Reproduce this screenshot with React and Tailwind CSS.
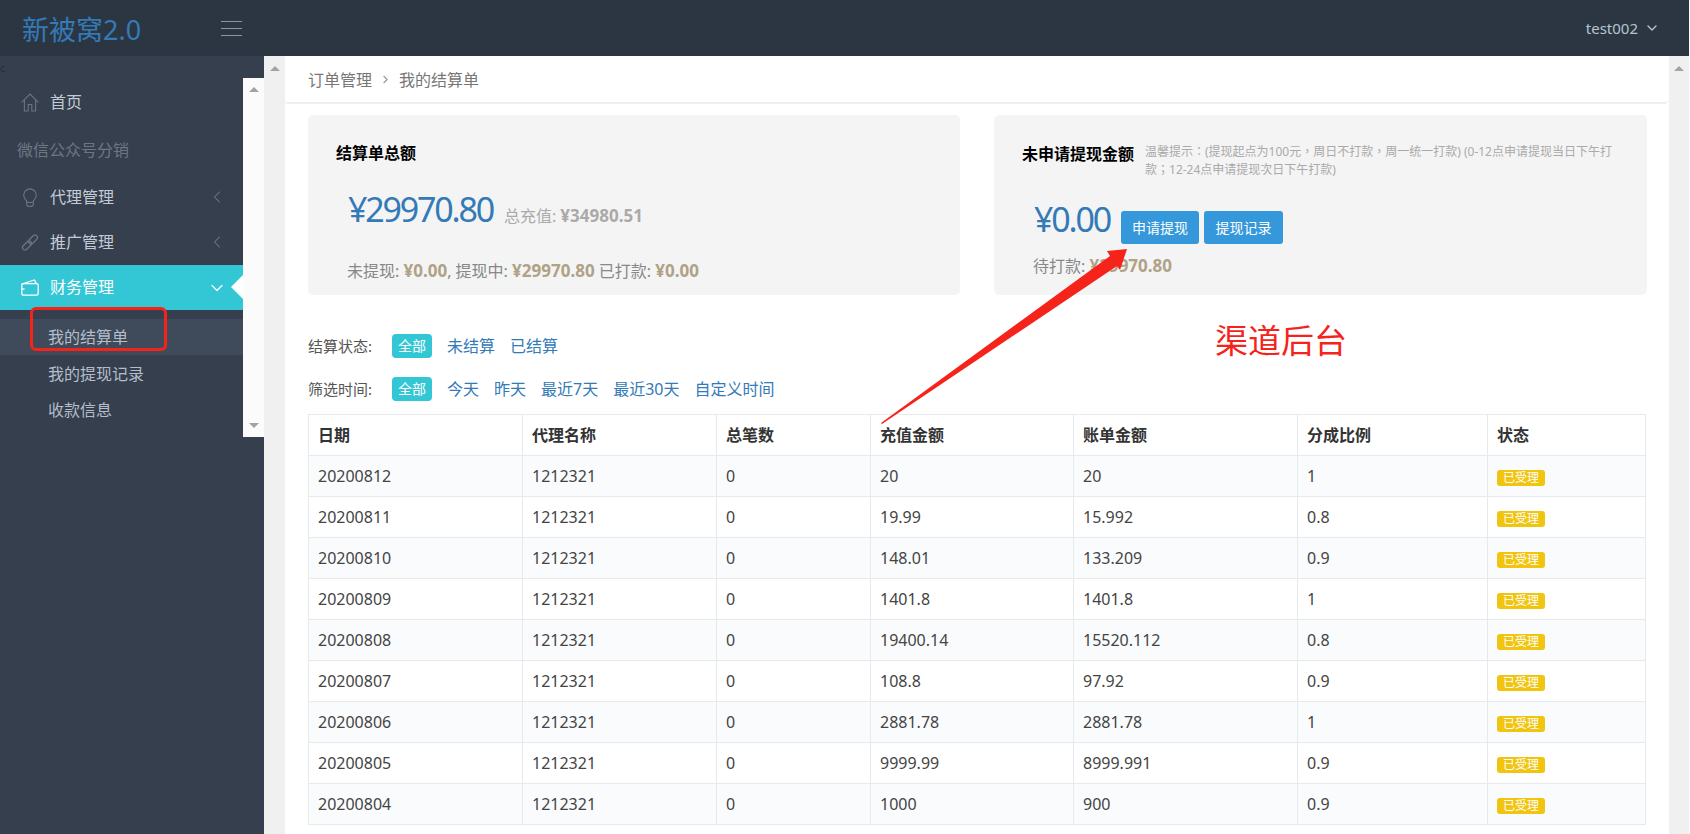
import { ChevronDown, ChevronLeft } from 'lucide-react'

const rows = [
  ['20200812', '20', '20', '1'],
  ['20200811', '19.99', '15.992', '0.8'],
  ['20200810', '148.01', '133.209', '0.9'],
  ['20200809', '1401.8', '1401.8', '1'],
  ['20200808', '19400.14', '15520.112', '0.8'],
  ['20200807', '108.8', '97.92', '0.9'],
  ['20200806', '2881.78', '2881.78', '1'],
  ['20200805', '9999.99', '8999.991', '0.9'],
  ['20200804', '1000', '900', '0.9'],
]

const headers = ['日期', '代理名称', '总笔数', '充值金额', '账单金额', '分成比例', '状态']

function HomeIcon() {
  return (
    <svg width="18" height="19" viewBox="0 0 18 19" fill="none" stroke="currentColor" strokeWidth="1.1" className="shrink-0">
      <path d="M.6 9.4 9 1l8.4 8.4" />
      <path d="M3.4 7v11h3.8v-6.5h3.6V18h3.8V7" />
    </svg>
  )
}

function BulbIcon() {
  return (
    <svg width="18" height="19" viewBox="0 0 18 19" fill="none" stroke="currentColor" strokeWidth="1.1" className="shrink-0">
      <path d="M5.6 13C4 11.4 2.7 9.8 2.7 7.2a6.3 6.3 0 0 1 12.6 0c0 2.6-1.3 4.2-2.9 5.8v3c0 1.5-1 2.4-2.4 2.4H8c-1.4 0-2.4-.9-2.4-2.4Z" />
      <path d="M5.6 14.4h6.8" />
    </svg>
  )
}

function LinkIcon() {
  return (
    <svg width="18" height="19" viewBox="0 0 18 19" fill="none" stroke="currentColor" strokeWidth="1.3" className="shrink-0">
      <rect x="-.5" y="7" width="10.5" height="5" rx="2.5" transform="rotate(-45 9 9.5)" />
      <rect x="8" y="7" width="10.5" height="5" rx="2.5" transform="rotate(-45 9 9.5)" />
    </svg>
  )
}

function WalletIcon() {
  return (
    <svg width="18" height="17" viewBox="0 0 18 17" fill="none" stroke="currentColor" strokeWidth="1.3" className="shrink-0">
      <path d="M.8 5 13.5 1l1.6 3.4" />
      <rect x=".8" y="4.6" width="16.4" height="11.6" rx="1.6" />
      <path d="M.8 10h2.8" />
    </svg>
  )
}

function ScrollUp() {
  return <div className="w-0 h-0 border-x-[5px] border-x-transparent border-b-[5px] border-b-[#a3a3a3]" />
}

function ScrollDown() {
  return <div className="w-0 h-0 border-x-[5px] border-x-transparent border-t-[5px] border-t-[#a3a3a3]" />
}

function NavItem({ icon, label, chevron, height }) {
  return (
    <div className={`${height} flex items-center pl-[21px] pr-[16px] text-[#c3cbd5] text-base`}>
      <span className="text-[#687587] flex">{icon}</span>
      <span className="ml-[11px] flex-1">{label}</span>
      {chevron && <ChevronLeft size={20} strokeWidth={1.25} className="text-[#6d7a8b]" />}
    </div>
  )
}

function Sidebar() {
  return (
    <aside className="w-[264px] shrink-0 bg-[#353f4e] flex flex-col">
      <div className="h-[22px] text-[#262e39] text-[11px] leading-[24px]">c</div>
      <div className="flex items-start">
        <nav className="w-[243px] shrink-0 pt-[1px]">
          <NavItem icon={<HomeIcon />} label="首页" height="h-[46px]" />
          <div className="h-[50px] flex items-center pl-[17px] text-[#6c7785] text-base">微信公众号分销</div>
          <NavItem icon={<BulbIcon />} label="代理管理" chevron height="h-[44px]" />
          <NavItem icon={<LinkIcon />} label="推广管理" chevron height="h-[46px]" />
          <div className="relative h-[45px] bg-[#33c7d6] flex items-center pl-[21px] pr-[16px] text-white text-base">
            <WalletIcon />
            <span className="ml-[11px] flex-1 -mt-[1px]">财务管理</span>
            <ChevronDown size={20} strokeWidth={1.5} />
            <div className="absolute right-0 top-[10px] w-0 h-0 border-y-[12px] border-y-transparent border-r-[12px] border-r-white" />
          </div>
          <div className="pt-[9px] text-base text-[#b4bdc9]">
            <div className="h-[36px] bg-[#3f4a5b] flex items-center pl-12">我的结算单</div>
            <div className="h-[37px] flex items-center pl-12">我的提现记录</div>
            <div className="h-[35px] flex items-center pl-12">收款信息</div>
          </div>
        </nav>
        <div className="w-[21px] h-[359px] bg-[#fbfbfb] flex flex-col items-center justify-between py-[9px]">
          <ScrollUp />
          <ScrollDown />
        </div>
      </div>
    </aside>
  )
}

function Card({ className, children }) {
  return <div className={`h-[180px] bg-[#f4f4f4] rounded-[5px] ${className}`}>{children}</div>
}

function Money({ children }) {
  return <b className="font-bold text-[17px] text-[#b0a286]">{children}</b>
}

function Filter({ label, options }) {
  return (
    <div className="h-6 flex items-center text-base">
      <span className="w-[84px] text-[15px] text-[#555]">{label}</span>
      <span className="w-10 h-6 mr-[15px] rounded-[4px] bg-[#33c7d6] text-white text-sm flex items-center justify-center">全部</span>
      <div className="flex gap-[15px] text-[#337ab7]">
        {options.map((o) => (
          <span key={o}>{o}</span>
        ))}
      </div>
    </div>
  )
}

function Content() {
  return (
    <main className="flex-1 min-w-0 bg-white">
      <div className="h-[48px] mr-[1px] pt-[1px] border-b-2 border-[#eeeeee] rounded-b-[4px] flex items-center pl-[23px] text-base text-[#777]">
        <span>订单管理</span>
        <ChevronLeft size={13} className="mx-[7px] rotate-180 text-[#999]" />
        <span>我的结算单</span>
      </div>
      <div className="pl-[23px] pr-[22px] pt-[11px]">
        <div className="flex justify-between">
          <Card className="w-[652px] pl-[28px] pt-[27px]">
            <h3 className="text-base font-bold text-black leading-[22px]">结算单总额</h3>
            <div className="pl-[12px] mt-[20px] flex items-baseline h-[50px]">
              <span className="text-[34px] tracking-[-2.2px] text-[#337ab7]">¥29970.80</span>
              <span className="ml-[11px] text-base text-[#aaa]">
                总充值: <b className="font-bold text-[17px]">¥34980.51</b>
              </span>
            </div>
            <p className="pl-[11px] mt-[26px] text-base text-[#888] leading-[22px]">
              未提现: <Money>¥0.00</Money>, 提现中: <Money>¥29970.80</Money> 已打款: <Money>¥0.00</Money>
            </p>
          </Card>
          <Card className="w-[653px] pl-[28px] pr-[28px] pt-[28px]">
            <div className="flex">
              <h3 className="shrink-0 text-base font-bold text-black leading-[22px]">未申请提现金额</h3>
              {/* TC face: the reference centres its full-width punctuation */}
              <p className="ml-[11px] text-xs text-[#aaa] leading-[18px] font-['Noto_Sans','Noto_Sans_CJK_TC',sans-serif]">
                温馨提示：(提现起点为100元，周日不打款，周一统一打款) (0-12点申请提现当日下午打款；12-24点申请提现次日下午打款)
              </p>
            </div>
            <div className="pl-[12px] mt-[15px] flex items-start h-[50px]">
              <span className="text-[34px] tracking-[-2.2px] text-[#337ab7] leading-[50px]">¥0.00</span>
              <button className="ml-[11px] mt-[17px] w-[78px] h-[33px] rounded-[3px] bg-[#3498db] text-white text-sm">申请提现</button>
              <button className="ml-[5px] mt-[17px] w-[79px] h-[33px] rounded-[3px] bg-[#3498db] text-white text-sm">提现记录</button>
            </div>
            <p className="pl-[11px] mt-[11px] text-base text-[#888] leading-[22px]">
              待打款: <Money>¥29970.80</Money>
            </p>
          </Card>
        </div>
        <div className="mt-[39px]">
          <Filter label="结算状态:" options={['未结算', '已结算']} />
        </div>
        <div className="mt-[19px]">
          <Filter label="筛选时间:" options={['今天', '昨天', '最近7天', '最近30天', '自定义时间']} />
        </div>
        <table className="mt-[13px] w-[1337px] table-fixed border-collapse text-base text-[#444]">
          <colgroup>
            <col className="w-[214px]" />
            <col className="w-[194px]" />
            <col className="w-[154px]" />
            <col className="w-[203px]" />
            <col className="w-[224px]" />
            <col className="w-[190px]" />
            <col className="w-[158px]" />
          </colgroup>
          <thead>
            <tr className="h-[41px]">
              {headers.map((h) => (
                <th key={h} className="border border-[#e7eaec] px-[9px] text-left font-bold text-[#333]">{h}</th>
              ))}
            </tr>
          </thead>
          <tbody>
            {rows.map((r, i) => (
              <tr key={r[0]} className={`h-[41px] ${i % 2 === 0 ? 'bg-[#fafbfd]' : 'bg-white'}`}>
                <td className="border border-[#e7eaec] px-[9px]">{r[0]}</td>
                <td className="border border-[#e7eaec] px-[9px]">1212321</td>
                <td className="border border-[#e7eaec] px-[9px]">0</td>
                <td className="border border-[#e7eaec] px-[9px]">{r[1]}</td>
                <td className="border border-[#e7eaec] px-[9px]">{r[2]}</td>
                <td className="border border-[#e7eaec] px-[9px]">{r[3]}</td>
                <td className="border border-[#e7eaec] px-[9px]">
                  <span className="inline-flex items-center justify-center w-12 h-4 rounded-[3px] bg-[#f1c40f] text-white text-xs align-middle">已受理</span>
                </td>
              </tr>
            ))}
          </tbody>
        </table>
      </div>
    </main>
  )
}

export default function App() {
  return (
    <div className="relative w-[1690px] h-[834px] overflow-hidden bg-white font-['Noto_Sans','Noto_Sans_CJK_SC',sans-serif]">
      <header className="h-14 mr-[1px] bg-[#2c3643] flex items-center">
        <div className="w-[264px] shrink-0 pl-[22px] pt-[2px] flex items-center justify-between pr-[22px]">
          <span className="text-[27px] text-[#337ab7] leading-none">新被窝2.0</span>
          <div className="w-[21px] flex flex-col gap-[6px] -mt-[2px]">
            <div className="h-[1px] bg-[#8a949f]" />
            <div className="h-[1px] bg-[#8a949f]" />
            <div className="h-[1px] bg-[#8a949f]" />
          </div>
        </div>
        <div className="ml-auto pr-[29px] flex items-center text-[15px] text-[#b4c4d2]">
          <span>test002</span>
          <ChevronDown size={16} className="ml-[6px]" />
        </div>
      </header>
      <div className="flex h-[778px]">
        <Sidebar />
        <div className="w-[21px] shrink-0 bg-[#f0f0f0] pt-[10px] flex justify-center">
          <ScrollUp />
        </div>
        <Content />
        <div className="w-[20px] shrink-0 mr-[1px] bg-[#f0f0f0] pt-[10px] flex justify-center">
          <ScrollUp />
        </div>
      </div>

      {/* red notes drawn on top of the screenshot */}
      <div className="absolute left-[30px] top-[307px] w-[137px] h-[44px] border-[3px] border-[#f5231a] rounded-[6px]" />
      <svg className="absolute left-0 top-0 pointer-events-none" width="1690" height="834">
        <polygon points="881,423 1110,256 1107,251 1127,249 1120,270 1117,266 882,424" fill="#f5231a" />
      </svg>
      <div className="absolute left-[1215px] top-[318px] text-[33px] leading-[46px] text-[#f5231a]">渠道后台</div>
    </div>
  )
}
